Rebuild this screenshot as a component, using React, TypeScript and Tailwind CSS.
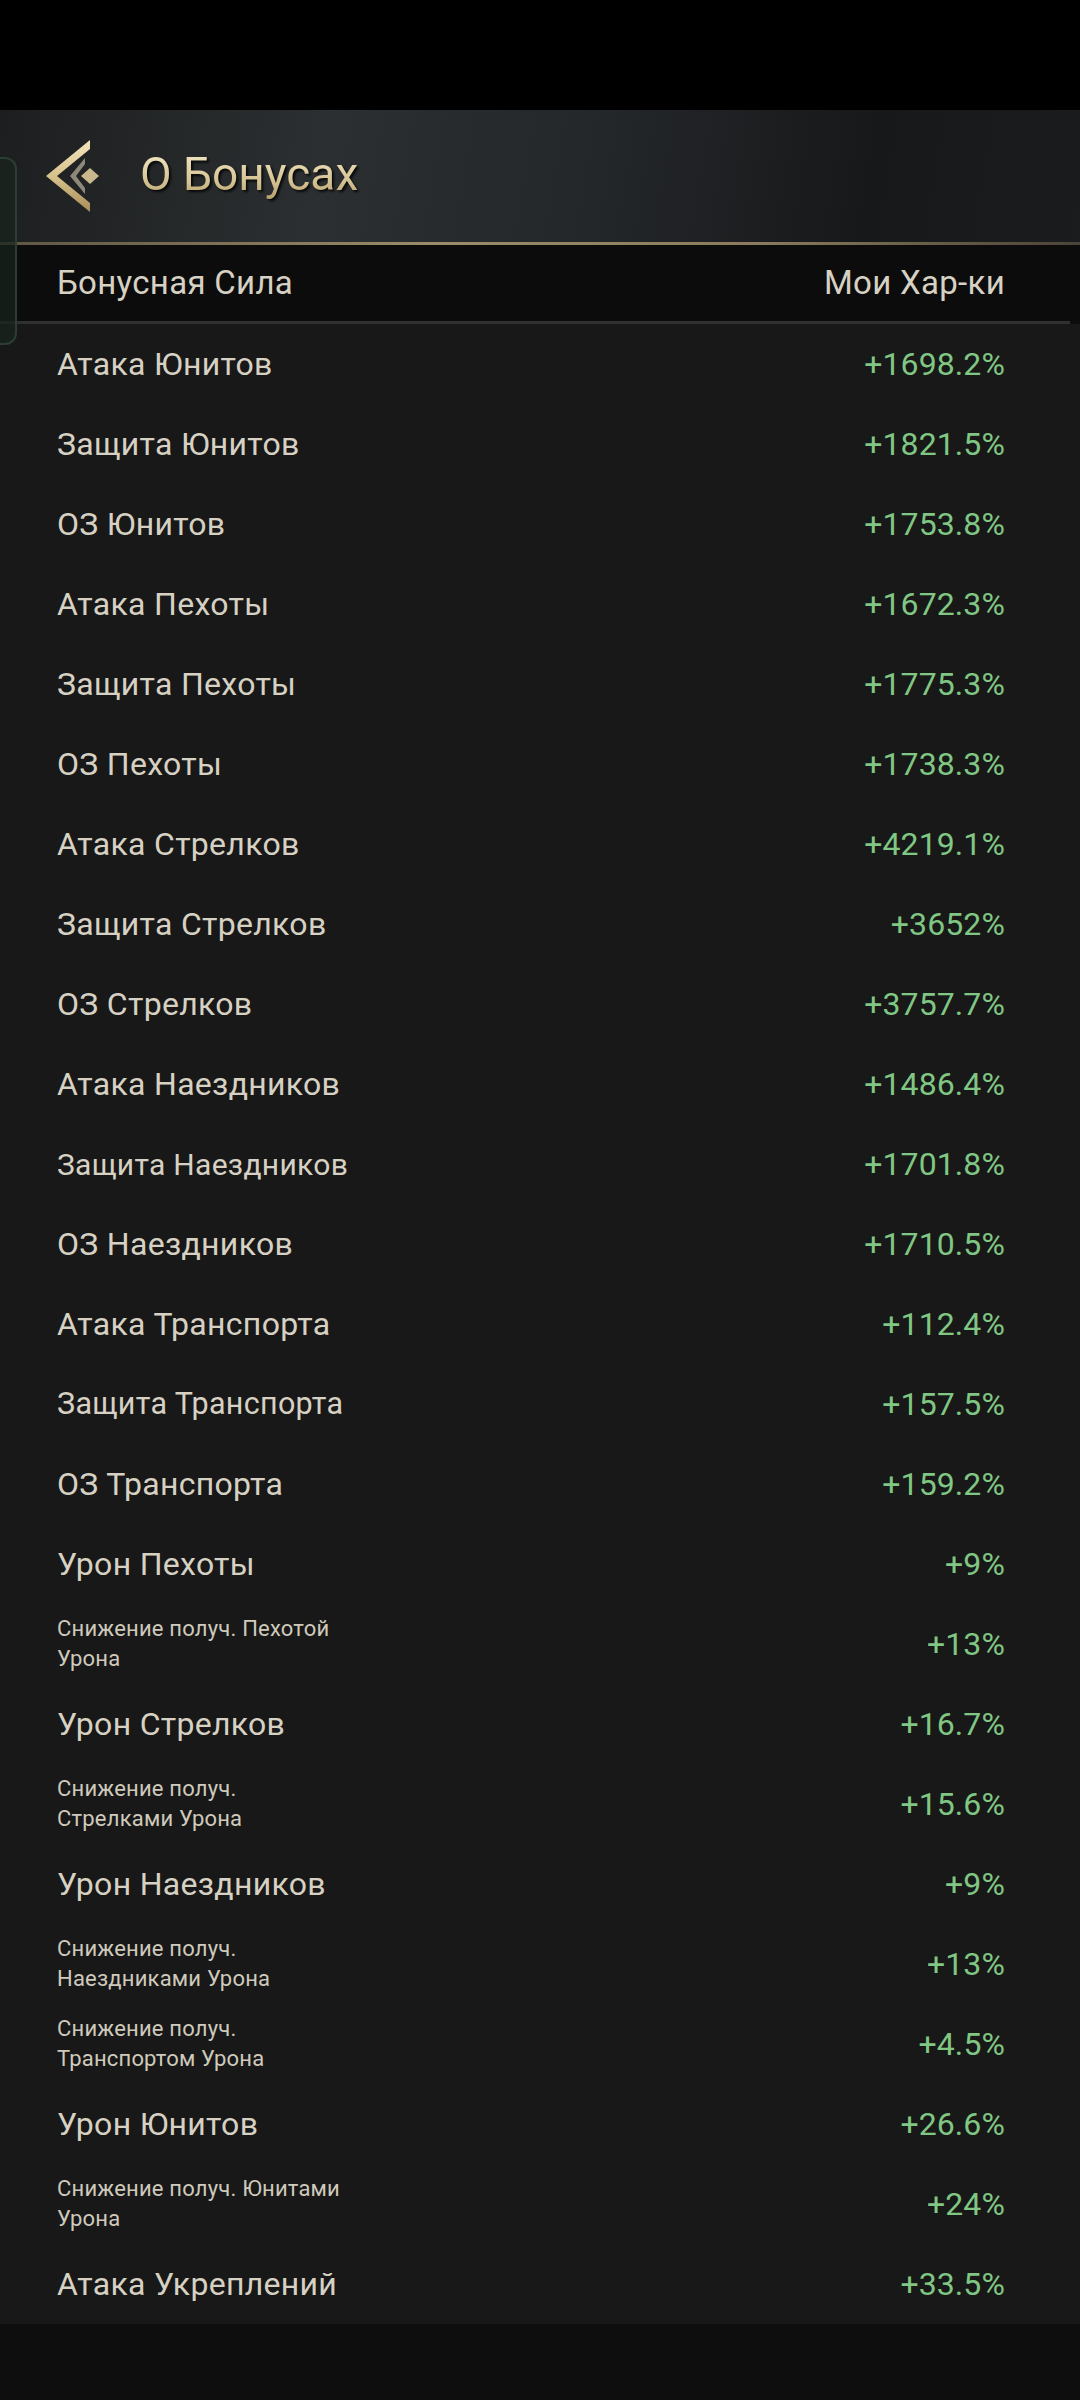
import React from "react";

type Row = { label: string; value: string; small?: boolean; size?: string };

const rows: Row[] = [
  { label: "Атака Юнитов", value: "+1698.2%" },
  { label: "Защита Юнитов", value: "+1821.5%" },
  { label: "ОЗ Юнитов", value: "+1753.8%" },
  { label: "Атака Пехоты", value: "+1672.3%" },
  { label: "Защита Пехоты", value: "+1775.3%" },
  { label: "ОЗ Пехоты", value: "+1738.3%" },
  { label: "Атака Стрелков", value: "+4219.1%" },
  { label: "Защита Стрелков", value: "+3652%" },
  { label: "ОЗ Стрелков", value: "+3757.7%" },
  { label: "Атака Наездников", value: "+1486.4%" },
  { label: "Защита Наездников", value: "+1701.8%", size: "text-[30px]" },
  { label: "ОЗ Наездников", value: "+1710.5%" },
  { label: "Атака Транспорта", value: "+112.4%" },
  { label: "Защита Транспорта", value: "+157.5%", size: "text-[30.5px]" },
  { label: "ОЗ Транспорта", value: "+159.2%" },
  { label: "Урон Пехоты", value: "+9%" },
  { label: "Снижение получ. Пехотой\nУрона", value: "+13%", small: true },
  { label: "Урон Стрелков", value: "+16.7%" },
  { label: "Снижение получ.\nСтрелками Урона", value: "+15.6%", small: true },
  { label: "Урон Наездников", value: "+9%" },
  { label: "Снижение получ.\nНаездниками Урона", value: "+13%", small: true },
  { label: "Снижение получ.\nТранспортом Урона", value: "+4.5%", small: true },
  { label: "Урон Юнитов", value: "+26.6%" },
  { label: "Снижение получ. Юнитами\nУрона", value: "+24%", small: true },
  { label: "Атака Укреплений", value: "+33.5%" },
];

function BackIcon() {
  return (
    <svg width="56" height="72" viewBox="0 0 56 72">
      <defs>
        <linearGradient id="gold" x1="0" y1="0" x2="0" y2="1">
          <stop offset="0" stopColor="#f3e6bd" />
          <stop offset="0.5" stopColor="#d8c28c" />
          <stop offset="1" stopColor="#a88e58" />
        </linearGradient>
      </defs>
      <polygon points="44,0 0,36 44,72 44,63 11,36 44,9" fill="url(#gold)" />
      <polygon points="39,18 24,36 39,54 39,48 30,36 39,24" fill="#8d887a" />
      <polygon points="44,28 53,36 44,44 35,36" fill="#c9b88e" />
    </svg>
  );
}

export default function App() {
  return (
    <div
      className="relative flex h-[2400px] w-[1080px] flex-col bg-[#0e0e0e]"
      style={{ fontFamily: "Roboto, 'Noto Sans', sans-serif" }}
    >
      <div className="h-[110px] bg-black" />
      <div className="flex h-[132px] items-center bg-[linear-gradient(100deg,#1c1e1f_0%,#2c2f31_30%,#24272a_55%,#17181a_80%,#1b1c1d_100%)] pl-[46px]">
        <BackIcon />
        <div className="ml-[38px] bg-[linear-gradient(180deg,#f2e7c6_0%,#d6c393_60%,#b49c68_100%)] bg-clip-text pb-[4px] text-[46px] leading-none text-transparent [filter:drop-shadow(2px_2px_1px_rgba(0,0,0,0.8))]">
          О Бонусах
        </div>
      </div>
      <div className="h-[3px] bg-[linear-gradient(90deg,#5e5544_0%,#9c8c68_40%,#8a7c5c_70%,#4a4438_100%)]" />
      <div className="flex h-[76px] items-center justify-between bg-[#0c0c0c] pl-[57px] pr-[75px] text-[33px] tracking-[0.3px] text-[#d6d1c3]">
        <span>Бонусная Сила</span>
        <span>Мои Хар-ки</span>
      </div>
      <div className="mr-[10px] h-[3px] bg-[#303030]" />
      <div className="flex flex-col bg-[#181818]">
        {rows.map((r, i) => (
          <div
            key={i}
            className="flex h-[80px] items-center justify-between pl-[57px] pr-[75px]"
          >
            {r.small ? (
              <span className="whitespace-pre-line text-[22px] leading-[30px] tracking-[0.2px] text-[#cfcabc]">
                {r.label}
              </span>
            ) : (
              <span className={`${r.size ?? "text-[32px]"} tracking-[0.3px] text-[#d6d1c3]`}>
                {r.label}
              </span>
            )}
            <span className="text-[32px] tracking-[0.1px] text-[#80c784]">{r.value}</span>
          </div>
        ))}
      </div>
      <div className="flex-1 bg-[#0e0e0e]" />
      <div className="absolute left-0 top-[157px] h-[188px] w-[17px] rounded-r-[12px] border-y-2 border-r-2 border-[#2c3e31] bg-[#18241c]/70" />
    </div>
  );
}
